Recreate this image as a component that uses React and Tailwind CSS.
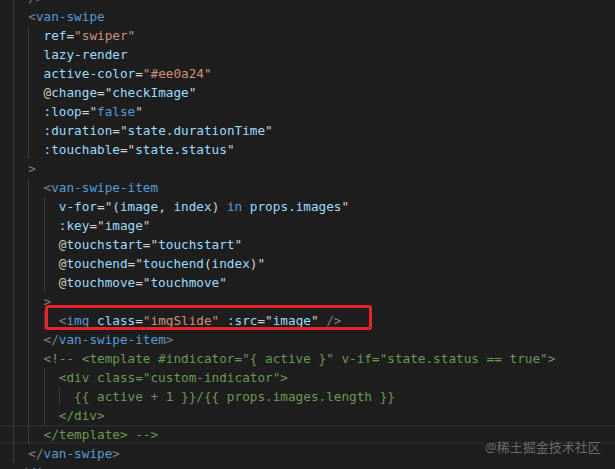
import React from "react";

const P = "#808080"; // brackets
const T = "#569cd6"; // tag / keyword
const A = "#9cdcfe"; // attr / identifiers
const W = "#d4d4d4"; // punctuation
const S = "#ce9178"; // string
const C = "#6a9955"; // comment
const AT = "#cfc9a8"; // @

const lines = [
  { i: 4, t: [["/>", P]] },
  { i: 4, t: [["<", P], ["van-swipe", T]] },
  { i: 6, t: [["ref", A], ["=", W], ['"swiper"', S]] },
  { i: 6, t: [["lazy-render", A]] },
  { i: 6, t: [["active-color", A], ["=", W], ['"#ee0a24"', S]] },
  { i: 6, t: [["@", AT], ["change", A], ["=", W], ['"', W], ["checkImage", A], ['"', W]] },
  { i: 6, t: [[":", A], ["loop", A], ["=", W], ['"', W], ["false", T], ['"', W]] },
  { i: 6, t: [[":", A], ["duration", A], ["=", W], ['"', W], ["state", A], [".", W], ["durationTime", A], ['"', W]] },
  { i: 6, t: [[":", A], ["touchable", A], ["=", W], ['"', W], ["state", A], [".", W], ["status", A], ['"', W]] },
  { i: 4, t: [[">", P]] },
  { i: 6, t: [["<", P], ["van-swipe-item", T]] },
  { i: 8, t: [["v-for", A], ["=", W], ['"', W], ["(", W], ["image", A], [", ", W], ["index", A], [") ", W], ["in", T], [" ", W], ["props", A], [".", W], ["images", A], ['"', W]] },
  { i: 8, t: [[":", A], ["key", A], ["=", W], ['"', W], ["image", A], ['"', W]] },
  { i: 8, t: [["@", AT], ["touchstart", A], ["=", W], ['"', W], ["touchstart", A], ['"', W]] },
  { i: 8, t: [["@", AT], ["touchend", A], ["=", W], ['"', W], ["touchend", A], ["(", W], ["index", A], [")", W], ['"', W]] },
  { i: 8, t: [["@", AT], ["touchmove", A], ["=", W], ['"', W], ["touchmove", A], ['"', W]] },
  { i: 6, t: [[">", P]] },
  { i: 8, t: [["<", P], ["img", T], [" ", W], ["class", A], ["=", W], ['"imgSlide"', S], [" ", W], [":", A], ["src", A], ["=", W], ['"', W], ["image", A], ['"', W], [" ", W], ["/>", P]] },
  { i: 6, t: [["</", P], ["van-swipe-item", T], [">", P]] },
  { i: 6, t: [['<!-- <template #indicator="{ active }" v-if="state.status == true">', C]] },
  { i: 8, t: [['<div class="custom-indicator">', C]] },
  { i: 10, t: [["{{ active + 1 }}/{{ props.images.length }}", C]] },
  { i: 8, t: [["</div>", C]] },
  { i: 6, t: [["</template> -->", C]], cur: true },
  { i: 4, t: [["</", P], ["van-swipe", T], [">", P]] },
  { i: 2, t: [["</", P], ["div", T], [">", P]] },
];

const CW = 7.65;
const guideCols = [2, 4, 6, 8];

function Line({ line }) {
  return (
    <div
      className={
        line.cur
          ? "relative h-[19px] leading-[19px] whitespace-pre shadow-[inset_0_2px_0_#282828,inset_0_-2px_0_#282828]"
          : "relative h-[19px] leading-[19px] whitespace-pre"
      }
    >
      {guideCols
        .filter((c) => c < line.i)
        .map((c) => (
          <span
            key={c}
            className="absolute top-0 bottom-0 w-px bg-[#3a3a3a]"
            style={{ left: c * CW }}
          />
        ))}
      <span>{" ".repeat(line.i)}</span>
      {line.t.map(([txt, col], k) => (
        <span key={k} style={{ color: col }}>
          {txt}
        </span>
      ))}
    </div>
  );
}

export default function App() {
  return (
    <div className="relative w-[615px] h-[469px] overflow-hidden bg-[#1e1e1e]">
      <div className="-mt-[12.5px] -ml-[2.3px] text-[12.7px] text-[#d4d4d4] font-['DejaVu_Sans_Mono','Liberation_Mono',monospace]">
        {lines.map((l, idx) => (
          <Line key={idx} line={l} />
        ))}
      </div>
      <div className="absolute left-[45px] top-[305px] w-[327px] h-[25px] border-[3px] border-[#e8242a] rounded-[3px]" />
      <div className="absolute left-[485px] top-[437px] text-[13px] leading-[20px] text-[#6a6a6a] font-['Noto_Sans','Noto_Sans_CJK_SC',sans-serif]">
        @稀土掘金技术社区
      </div>
    </div>
  );
}
